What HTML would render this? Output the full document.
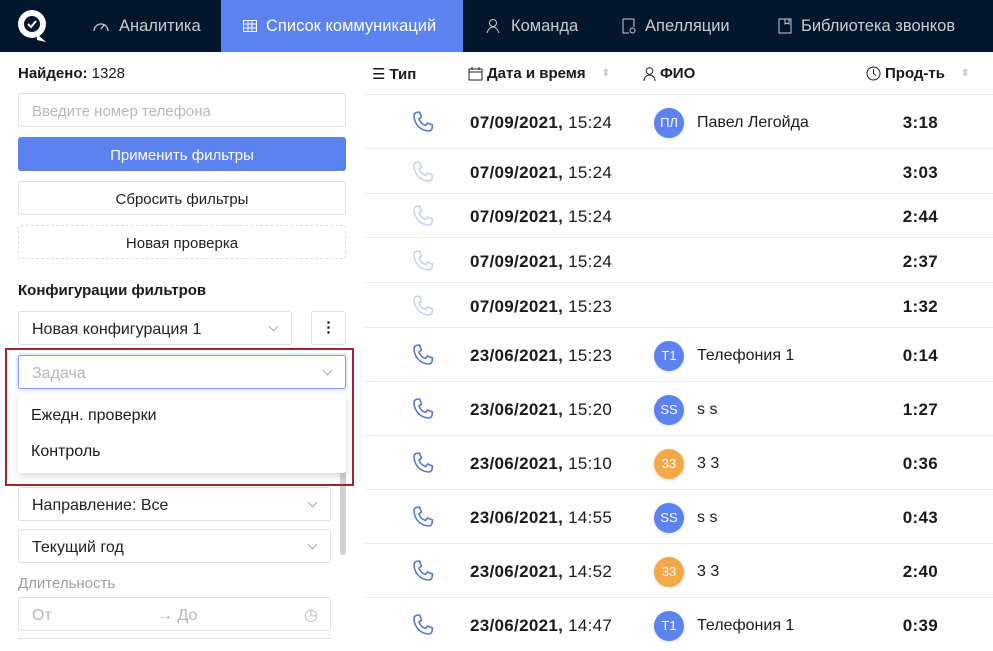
<!DOCTYPE html>
<html><head><meta charset="utf-8"><style>
*{box-sizing:border-box;margin:0;padding:0}
body{width:993px;height:641px;overflow:hidden;background:#fff;font-family:"Liberation Sans",sans-serif;position:relative;color:#1a1a1a}
.nav{position:absolute;left:0;top:0;width:993px;height:52px;background:#03162b}
.tab{position:absolute;top:0;height:52px;line-height:50px;color:#c9ccd2;font-size:16.5px;display:flex;align-items:center;gap:9px}
.tab.act{background:#5b82ee;color:#fff;left:221px;width:242px;padding-left:22px}
.abs{position:absolute}
.inp{position:absolute;border:1px solid #dcdfe4;border-radius:3px;height:34px;font-size:15px;padding-left:13px;line-height:35px;color:#222}
.chev{position:absolute;right:14px;top:11px;width:7px;height:7px;border-right:1px solid #aaa;border-bottom:1px solid #aaa;transform:rotate(45deg)}
.hd{position:absolute;top:65px;font-size:15px;font-weight:bold;display:flex;align-items:center;gap:4px}
.row{position:absolute;left:365px;width:628px;border-top:1px solid #ececec}
.row .ph{position:absolute;left:46px}
.row .dt{position:absolute;left:105px;font-size:17px;letter-spacing:.3px}
.row .av{position:absolute;left:289px;width:30px;height:30px;border-radius:50%;color:#fff;font-size:13px;text-align:center;line-height:30px;box-shadow:0 1px 3px rgba(0,0,0,.15)}
.row .nm{position:absolute;left:332px;font-size:16px}
.row .du{position:absolute;right:55px;font-size:17px;font-weight:bold;letter-spacing:.3px}
</style></head><body>
<div class="nav">
 <svg class="abs" style="left:17px;top:9px" width="32" height="34" viewBox="0 0 32 34"><circle cx="15" cy="15" r="14" fill="#fff"/><path d="M20 25 L29 33 L20 31Z" fill="#fff"/><circle cx="15" cy="15" r="8" fill="#03162b"/><path d="M11 15l3 3 5-6" stroke="#fff" stroke-width="2" fill="none"/></svg>
 <div class="tab" style="left:92px"><svg width="18" height="16" viewBox="0 0 18 16"><path d="M2 13a7 7 0 1 1 14 0" stroke="#c9ccd2" fill="none" stroke-width="1.3"/><path d="M9 11l3-4" stroke="#c9ccd2" stroke-width="1.3"/></svg>Аналитика</div>
 <div class="tab act"><svg width="14" height="12" viewBox="0 0 14 12"><path d="M.5.5h13v11H.5zM.5 4h13M.5 8h13M5 .5v11M9 .5v11" stroke="#fff" fill="none"/></svg>Список коммуникаций</div>
 <div class="tab" style="left:486px"><svg width="16" height="16" viewBox="0 0 16 16"><circle cx="7" cy="5" r="3.5" stroke="#c9ccd2" fill="none"/><path d="M1 15c1-4 4-6 6-6s5 2 6 6" stroke="#c9ccd2" fill="none"/></svg>Команда</div>
 <div class="tab" style="left:622px"><svg width="14" height="16" viewBox="0 0 14 16"><path d="M1 1h11v8M1 1v14h6" stroke="#c9ccd2" fill="none"/><circle cx="10.5" cy="12.5" r="2.5" stroke="#c9ccd2" fill="none"/></svg>Апелляции</div>
 <div class="tab" style="left:778px"><svg width="14" height="16" viewBox="0 0 14 16"><path d="M1 1h12v14H1zM7 1v5l2-1 2 1V1" stroke="#c9ccd2" fill="none"/></svg>Библиотека звонков</div>
</div>

<div class="abs" style="left:18px;top:65px;font-size:15px"><b>Найдено:</b> 1328</div>
<div class="inp" style="left:18px;top:93px;width:328px;color:#b5b8bd">Введите номер телефона</div>
<div class="inp" style="left:18px;top:137px;width:328px;background:#5b82ee;border-color:#5b82ee;color:#fff;text-align:center;padding:0">Применить фильтры</div>
<div class="inp" style="left:18px;top:181px;width:328px;text-align:center;padding:0">Сбросить фильтры</div>
<div class="inp" style="left:18px;top:225px;width:328px;text-align:center;padding:0;border-style:dashed">Новая проверка</div>
<div class="abs" style="left:18px;top:282px;font-size:15px;font-weight:bold">Конфигурации фильтров</div>
<div class="inp" style="left:18px;top:311px;width:274px;font-size:16px">Новая конфигурация 1<i class="chev"></i></div>
<div class="inp" style="left:311px;top:311px;width:35px;text-align:center;padding:0;font-weight:bold;line-height:32px">⋮</div>
<div class="abs" style="left:340px;top:470px;width:6px;height:85px;background:#cfd1d4;border-radius:3px"></div>
<div class="inp" style="left:18px;top:487px;width:313px;font-size:16px">Направление: Все<i class="chev"></i></div>
<div class="inp" style="left:18px;top:529px;width:313px;font-size:16px">Текущий год<i class="chev"></i></div>
<div class="abs" style="left:18px;top:575px;font-size:15px;color:#9a9da2">Длительность</div>
<div class="inp" style="left:18px;top:597px;width:313px;color:#b5b8bd;font-size:16px">От<span class="abs" style="left:138px">→ До</span><span class="abs" style="right:12px;top:0">◷</span></div>
<div class="abs" style="left:18px;top:638px;width:313px;height:3px;border-top:1px solid #dcdfe4"></div>

<div class="abs" style="left:5px;top:348px;width:349px;height:138px;border:2px solid #a0252d"></div>
<div class="inp" style="left:18px;top:355px;width:328px;border-color:#7f9ef0;color:#b5b8bd;font-size:16px;box-shadow:0 0 0 2px rgba(91,130,238,.15)">Задача<i class="chev"></i></div>
<div class="abs" style="left:18px;top:394px;width:328px;height:79px;background:#fff;border-radius:3px;box-shadow:0 3px 8px rgba(0,0,0,.15);font-size:16px">
 <div class="abs" style="left:13px;top:13px">Ежедн. проверки</div>
 <div class="abs" style="left:13px;top:49px">Контроль</div>
</div>

<div class="hd" style="left:372px"><span style="font-weight:normal">☰</span>Тип</div>
<div class="hd" style="left:468px"><svg width="15" height="14" viewBox="0 0 15 14"><path d="M1 2h13v11H1zM1 5h13M4 0v3M11 0v3" stroke="#222" fill="none"/></svg>Дата и время<span style="color:#ccc;font-size:10px;margin-left:12px">⬍</span></div>
<div class="hd" style="left:643px"><svg width="13" height="14" viewBox="0 0 13 14"><circle cx="6.5" cy="4" r="3.3" stroke="#222" fill="none"/><path d="M1 14c0-4 3-6 5.5-6s5.5 2 5.5 6" stroke="#222" fill="none"/></svg>ФИО</div>
<div class="hd" style="left:866px"><svg width="15" height="15" viewBox="0 0 15 15"><circle cx="7.5" cy="7.5" r="6.5" stroke="#222" fill="none"/><path d="M7.5 3.5v4l2.5 2" stroke="#222" fill="none"/></svg>Прод-ть<span style="color:#ccc;font-size:10px;margin-left:12px">⬍</span></div>

<div id="rows"></div>
<script>
var R=[[94,54,'07/09/2021','15:24','ПЛ','#5b82ee','Павел Легойда','3:18',1],
[148,45,'07/09/2021','15:24','','','','3:03',0],
[193,44,'07/09/2021','15:24','','','','2:44',0],
[237,45,'07/09/2021','15:24','','','','2:37',0],
[282,45,'07/09/2021','15:23','','','','1:32',0],
[327,54,'23/06/2021','15:23','T1','#5b82ee','Телефония 1','0:14',1],
[381,54,'23/06/2021','15:20','SS','#5b82ee','s s','1:27',1],
[435,54,'23/06/2021','15:10','33','#f3a948','3 3','0:36',1],
[489,54,'23/06/2021','14:55','SS','#5b82ee','s s','0:43',1],
[543,54,'23/06/2021','14:52','33','#f3a948','3 3','2:40',1],
[597,54,'23/06/2021','14:47','T1','#5b82ee','Телефония 1','0:39',1]];
var h='';R.forEach(function(r){var c=r[1]/2,col=r[8]?'#5677c9':'#c5d3ef';
h+='<div class="row" style="top:'+r[0]+'px;height:'+r[1]+'px"><svg class="ph" style="top:'+(c-12)+'px" width="24" height="24" viewBox="0 0 24 24"><path d="M5 2.5l3.5-.5 2 5-2.5 2c1 3 3.5 5.5 6.5 6.5l2-2.5 5 2-.5 3.5c-.5 1.5-2 2.5-3.5 2.5C9.5 20.5 3.5 14.5 3 6c0-1.5 1-3 2-3.5z" stroke="'+col+'" stroke-width="1.6" fill="none" stroke-linejoin="round"/></svg>'+
'<div class="dt" style="top:'+(c-9)+'px"><b>'+r[2]+',</b> '+r[3]+'</div>'+
(r[4]?'<div class="av" style="top:'+(c-14)+'px;background:'+r[5]+'">'+r[4]+'</div><div class="nm" style="top:'+(c-8)+'px">'+r[6]+'</div>':'')+
'<div class="du" style="top:'+(c-9)+'px">'+r[7]+'</div></div>';});
document.getElementById('rows').innerHTML=h;
</script>
</body></html>
